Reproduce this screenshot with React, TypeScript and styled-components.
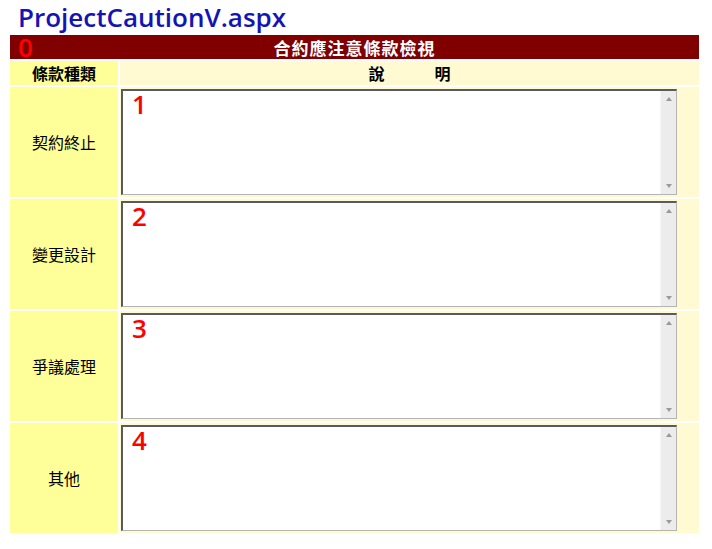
import React from "react";
import styled, { createGlobalStyle } from "styled-components";

const Global = createGlobalStyle`
  html, body { margin: 0; padding: 0; background: #ffffff; }
  body { font-family: "Noto Sans CJK TC", "Noto Sans", sans-serif; }
`;

const Page = styled.div`
  width: 712px;
  padding: 0 10px;
  box-sizing: border-box;
`;

const Title = styled.h1`
  margin: 0;
  padding: 2px 0 0 8px;
  height: 35px;
  box-sizing: border-box;
  font-family: "Open Sans", "Noto Sans", sans-serif;
  font-size: 26px;
  font-weight: 600;
  line-height: 30px;
  color: #1414b4;
`;

const Table = styled.div`
  width: 689px;
  display: grid;
  grid-template-columns: 108px 1fr;
  grid-template-rows: 24px 24px repeat(4, 110px);
  gap: 2px;
`;

const HeaderBar = styled.div`
  position: relative;
  grid-column: 1 / -1;
  background: #800000;
  color: #ffffff;
  font-size: 17px;
  font-weight: 700;
  letter-spacing: 1px;
  display: flex;
  align-items: center;
  justify-content: center;
`;

const Marker = styled.span<{ $top: number; $left: number }>`
  position: absolute;
  top: ${(p) => p.$top}px;
  left: ${(p) => p.$left}px;
  font-family: "Open Sans", "Noto Sans", sans-serif;
  font-size: 26px;
  line-height: 24px;
  color: #ff0000;
  letter-spacing: 0;
  font-weight: 600;
`;

const Cell = styled.div<{ $tone: "label" | "body"; $bold?: boolean }>`
  position: relative;
  background: ${(p) => (p.$tone === "label" ? "#ffff99" : "#fffad2")};
  font-size: 16px;
  font-weight: ${(p) => (p.$bold ? 700 : 400)};
  color: #000000;
  display: flex;
  align-items: center;
  justify-content: center;
`;

const FieldCell = styled.div`
  position: relative;
  background: #fffad2;
  padding: 2px 0 0 1px;
`;

const Gap = styled.span`
  display: inline-block;
  width: 50px;
`;

const Field = styled.div`
  width: 556px;
  height: 106px;
  box-sizing: border-box;
  border-style: solid;
  border-width: 2px 1px 1px 2px;
  border-color: #5a5a5a #b4b4b4 #b4b4b4 #5a5a5a;
  background: #ffffff;
  display: flex;
`;

const Area = styled.textarea`
  flex: 1;
  border: none;
  outline: none;
  resize: none;
  overflow: hidden;
  background: transparent;
  margin: 0;
  padding: 2px;
  font-family: "Noto Sans CJK TC", sans-serif;
  font-size: 13px;
`;

const ScrollBar = styled.div`
  width: 16px;
  background: #ececec;
  border-left: 1px solid #f6f6f6;
  display: flex;
  flex-direction: column;
  justify-content: space-between;
  align-items: center;
  padding: 6px 0 6px;
  box-sizing: border-box;
`;

const Arrow = styled.span<{ $down?: boolean }>`
  width: 0;
  height: 0;
  border-left: 3.5px solid transparent;
  border-right: 3.5px solid transparent;
  ${(p) =>
    p.$down
      ? "border-top: 4px solid #9a9a9a;"
      : "border-bottom: 4px solid #9a9a9a;"}
`;

const rows = ["契約終止", "變更設計", "爭議處理", "其他"];

export default function App() {
  return (
    <>
      <Global />
      <Page>
        <Title>ProjectCautionV.aspx</Title>
        <Table>
          <HeaderBar>
            <Marker $top={0} $left={8}>0</Marker>
            合約應注意條款檢視
          </HeaderBar>
          <Cell $tone="label" $bold>條款種類</Cell>
          <Cell $tone="body" $bold>
            說<Gap />明
          </Cell>
          {rows.map((label, i) => (
            <React.Fragment key={label}>
              <Cell $tone="label">{label}</Cell>
              <FieldCell>
                <Field>
                  <Area readOnly defaultValue="" />
                  <ScrollBar>
                    <Arrow />
                    <Arrow $down />
                  </ScrollBar>
                </Field>
                <Marker $top={5} $left={12}>{i + 1}</Marker>
              </FieldCell>
            </React.Fragment>
          ))}
        </Table>
      </Page>
    </>
  );
}
